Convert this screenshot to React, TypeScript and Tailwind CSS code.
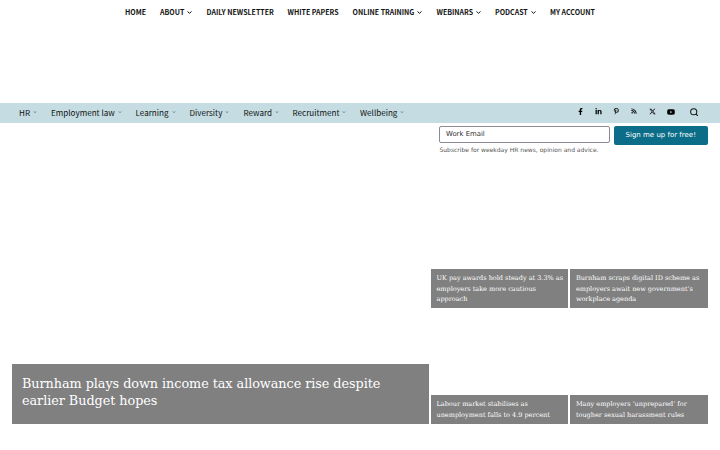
import React from 'react';
import { FaFacebookF, FaLinkedinIn, FaPinterestP, FaRss, FaYoutube } from 'react-icons/fa';
import { FaXTwitter } from 'react-icons/fa6';

const topItems = [
  { label: 'HOME', width: 'w-[35px]' },
  { label: 'ABOUT', width: 'w-[46.5px]', menu: true },
  { label: 'DAILY NEWSLETTER', width: 'w-[81px]' },
  { label: 'WHITE PAPERS', width: 'w-[65px]' },
  { label: 'ONLINE TRAINING', width: 'w-[84px]', menu: true },
  { label: 'WEBINARS', width: 'w-[58.5px]', menu: true },
  { label: 'PODCAST', width: 'w-[55px]', menu: true },
  { label: 'MY ACCOUNT', width: 'w-[50px]' },
];

const sections = [
  { label: 'HR', width: 'w-[32px]' },
  { label: 'Employment law', width: 'w-[84.5px]' },
  { label: 'Learning', width: 'w-[54px]' },
  { label: 'Diversity', width: 'w-[54px]' },
  { label: 'Reward', width: 'w-[49px]' },
  { label: 'Recruitment', width: 'w-[67.5px]' },
  { label: 'Wellbeing', width: 'w-[60px]' },
];

function Chevron({ className }: { className: string }) {
  return (
    <svg viewBox="0 0 10 6" className={className} fill="none" stroke="currentColor" strokeWidth="2">
      <path d="M1 1l4 3.6L9 1" />
    </svg>
  );
}

function Story({ lines, height }: { lines: string[]; height: string }) {
  return (
    <a className={`flex w-[137.4px] flex-col bg-[#808080] pl-[5.5px] pt-1 font-['DejaVu_Serif',serif] text-[6.5px] leading-[10.5px] text-white ${height}`}>
      {lines.map((line) => (
        <span key={line} className="whitespace-nowrap">{line}</span>
      ))}
    </a>
  );
}

export default function App() {
  return (
    <div className="h-[450px] w-[720px] overflow-hidden bg-white font-['Noto_Sans_CJK_SC',sans-serif]">
      <nav className="flex h-[103px] pl-[125px] pt-[7px] text-[7px] font-bold leading-[11px] text-[#111]">
        {topItems.map((item) => (
          <a key={item.label} className={`flex h-[11px] shrink-0 items-center gap-[3px] whitespace-nowrap ${item.width}`}>
            {item.label}
            {item.menu && <Chevron className="h-[3px] w-[5px]" />}
          </a>
        ))}
      </nav>

      <div className="flex h-5 items-center bg-[#c5dde2] pl-[19px] text-[#111]">
        <nav className="mb-[1px] flex w-[558px] text-[8.1px] leading-[18px]">
          {sections.map((item) => (
            <a key={item.label} className={`flex shrink-0 items-center gap-[3px] whitespace-nowrap ${item.width}`}>
              {item.label}
              <Chevron className="h-[2.2px] w-1 text-[#60757a]" />
            </a>
          ))}
        </nav>
        <div className="mb-[3px] flex items-center text-[7px] text-black">
          <span className="w-[18px]"><FaFacebookF className="-ml-[0.5px]" /></span>
          <span className="w-[18px]"><FaLinkedinIn /></span>
          <span className="w-[18px]"><FaPinterestP className="text-[6.5px]" /></span>
          <span className="w-[18px]"><FaRss className="mb-[0.5px] text-[6px]" /></span>
          <span className="w-[18px]"><FaXTwitter /></span>
          <span className="w-[22.5px]"><FaYoutube className="text-[8px]" /></span>
        </div>
        <svg viewBox="0 0 16 16" className="mb-[2px] h-[8.5px] w-[8.5px]" fill="none" stroke="currentColor" strokeWidth="1.9">
          <circle cx="7" cy="7" r="5.8" />
          <path d="M11 11l4.3 4.3" />
        </svg>
      </div>

      <div className="flex h-[146px] gap-1 pl-[439px] pt-[3px] font-['DejaVu_Sans',sans-serif]">
        <div className="w-[170.5px]">
          <div className="flex h-[17px] items-center rounded-[2px] border border-[#8b8b96] pl-[6px] text-[6.9px] text-[#333]">Work Email</div>
          <p className="pl-[0.5px] pt-[3px] text-[6px] leading-[8px] whitespace-nowrap text-[#555]">Subscribe for weekday HR news, opinion and advice.</p>
        </div>
        <button className="h-[19px] w-[94.5px] rounded-[2px] bg-[#0b6d88] text-[7px] leading-[19px] whitespace-nowrap text-white">Sign me up for free!</button>
      </div>

      <main className="flex h-[155.3px] gap-[2px] pl-3">
        <div className="flex w-[417px] items-end">
          <a className="flex h-[60.3px] w-full flex-col bg-[#808080] pl-[10px] pt-[11px] font-['DejaVu_Serif',serif] text-[12.8px] leading-[17px] tracking-[-0.05px] text-white">
            <span className="whitespace-nowrap">Burnham plays down income tax allowance rise despite</span>
            <span className="whitespace-nowrap">earlier Budget hopes</span>
          </a>
        </div>
        <div className="flex w-[277px] flex-col justify-between">
          <div className="flex gap-[2px]">
            <Story height="h-[39.3px]" lines={['UK pay awards hold steady at 3.3% as', 'employers take more cautious', 'approach']} />
            <Story height="h-[39.3px]" lines={['Burnham scraps digital ID scheme as', 'employers await new government’s', 'workplace agenda']} />
          </div>
          <div className="flex gap-[2px]">
            <Story height="h-[29px]" lines={['Labour market stabilises as', 'unemployment falls to 4.9 percent']} />
            <Story height="h-[29px]" lines={['Many employers ‘unprepared’ for', 'tougher sexual harassment rules']} />
          </div>
        </div>
      </main>
    </div>
  );
}
